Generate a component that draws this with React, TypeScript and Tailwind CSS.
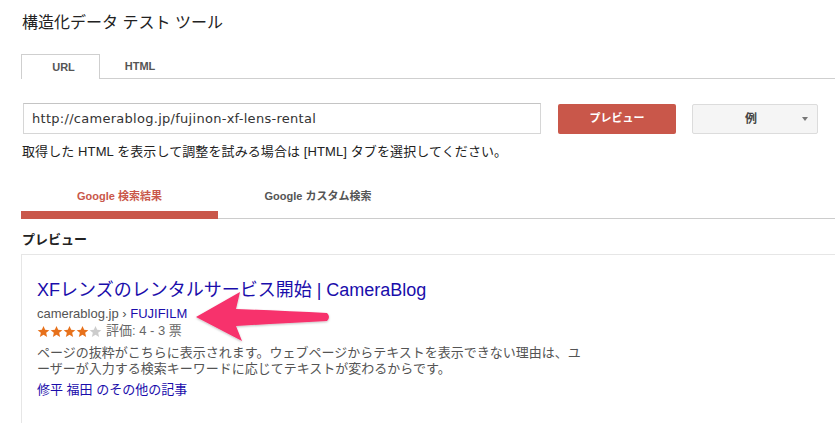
import React from "react";

const font = '"Liberation Sans", Arial, "Noto Sans CJK JP", sans-serif';

function Star({ color }: { color: string }) {
  return (
    <svg width="13" height="13" viewBox="0 0 24 24" className="shrink-0">
      <path
        d="M12 1.8l3.1 7.1 7.7.6-5.9 5 1.8 7.6L12 18.1l-6.7 4 1.8-7.6-5.9-5 7.7-.6z"
        fill={color}
      />
    </svg>
  );
}

export default function App() {
  return (
    <div
      className="relative w-[835px] h-[423px] overflow-hidden bg-white text-[#222]"
      style={{ fontFamily: font }}
    >
      <div className="flex flex-col pl-[21px]">
        {/* Title */}
        <div className="pt-[11px] pl-px text-[16px] leading-[24px] text-[#222]">
          構造化データ テスト ツール
        </div>

        {/* URL / HTML tabs */}
        <div className="mt-[19px] flex h-[25px] border-b border-[#cfcfcf]">
          <div className="-mb-px flex w-[79px] items-center justify-center border border-b-0 border-[#cfcfcf] bg-white pl-[6px] text-[11px] font-bold text-[#555]">
            URL
          </div>
          <div className="flex w-[80px] items-center justify-center text-[11px] font-bold text-[#555]">
            HTML
          </div>
        </div>

        {/* Input row */}
        <div className="mt-[24px] flex items-center pl-[2px]">
          <div className="flex h-[31px] w-[518px] items-center border border-[#d6d6d6] border-t-[#c4c4c4] bg-white pl-[8px] font-['DejaVu_Sans',sans-serif] text-[13px] tracking-[0.28px] text-[#333]">
            http://camerablog.jp/fujinon-xf-lens-rental
          </div>
          <div className="ml-[17px] flex h-[30px] w-[118px] items-center justify-center rounded-[2px] bg-[#c9574a] text-[11px] font-bold text-white">
            プレビュー
          </div>
          <div className="ml-[16px] flex h-[30px] w-[126px] items-center rounded-[2px] border border-[#dcdcdc] bg-[#f5f5f5]">
            <span className="ml-[52px] text-[12px] font-bold text-[#444]">例</span>
            <span className="ml-auto mr-[9px] h-0 w-0 border-x-[3.5px] border-t-[4px] border-x-transparent border-t-[#777]" />
          </div>
        </div>

        {/* Helper text */}
        <div className="mt-[10px] pl-px text-[13px] leading-[16px] tracking-[0.1px] text-[#222]">
          取得した HTML を表示して調整を試みる場合は [HTML] タブを選択してください。
        </div>

        {/* Google tabs */}
        <div className="mt-[28px] flex border-b border-[#cccccc]">
          <div className="-mb-px flex w-[197px] flex-col items-center border-b-[8px] border-[#c9574a]">
            <span className="pb-[7px] text-[11px] font-bold leading-[16px] text-[#c9574a]">
              Google 検索結果
            </span>
          </div>
          <div className="flex w-[200px] flex-col items-center">
            <span className="pb-[7px] text-[11px] font-bold leading-[16px] text-[#555]">
              Google カスタム検索
            </span>
          </div>
        </div>

        {/* Preview heading */}
        <div className="mt-[13px] pl-px text-[13px] font-bold leading-[16px] text-[#222]">
          プレビュー
        </div>

        {/* Card */}
        <div className="mt-[6px] h-[200px] w-[900px] border-l border-t border-[#e6e6e6] pl-[15px] pt-[24px]">
          <div className="text-[18px] leading-[22px] text-[#1a0dab]">
            XFレンズのレンタルサービス開始 | CameraBlog
          </div>
          <div className="mt-[5px] text-[13px] leading-[16px] text-[#545454]">
            camerablog.jp › <span className="text-[#1a0dab]">FUJIFILM</span>
          </div>
          <div className="mt-px flex items-center text-[13px] leading-[16px]">
            <Star color="#e7711b" />
            <Star color="#e7711b" />
            <Star color="#e7711b" />
            <Star color="#e7711b" />
            <Star color="#cccccc" />
            <span className="ml-[4px] text-[#666]">評価: 4 - 3 票</span>
          </div>
          <div className="mt-[6px] text-[13px] leading-[16px] text-[#545454]">
            <div>ページの抜粋がこちらに表示されます。ウェブページからテキストを表示できない理由は、ユ</div>
            <div>ーザーが入力する検索キーワードに応じてテキストが変わるからです。</div>
          </div>
          <div className="mt-[5px] text-[13px] leading-[16px] text-[#1a0dab]">
            修平 福田 のその他の記事
          </div>
        </div>
      </div>

      {/* Annotation arrow */}
      <svg
        className="pointer-events-none absolute left-0 top-0"
        width="835"
        height="423"
        viewBox="0 0 835 423"
      >
        <defs>
          <filter id="sh" x="-20%" y="-20%" width="140%" height="140%">
            <feDropShadow dx="0" dy="1" stdDeviation="1" floodColor="#000" floodOpacity="0.25" />
          </filter>
        </defs>
        <path
          d="M196 317 L240 292 L236 309 Q285 311 327 313 Q331 317 327 321 Q285 323 236 326 L242 341 Z"
          fill="#f7306c"
          filter="url(#sh)"
        />
      </svg>
    </div>
  );
}
